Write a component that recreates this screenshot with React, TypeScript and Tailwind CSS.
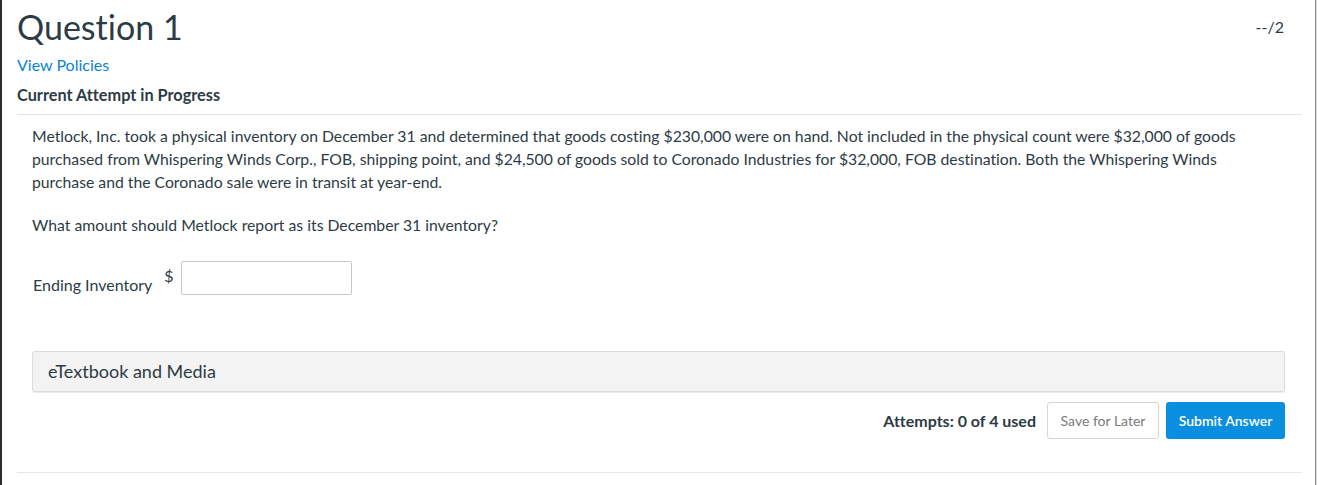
import React from "react";

const font = {
    fontFamily: "Lato, 'Noto Sans', sans-serif",
    fontVariantLigatures: "none" as const,
};

export default function App() {
    return (
        <div
            className="flex h-[485px] w-[1317px] overflow-hidden bg-white text-[#2d3b45]"
            style={font}
        >
            {/* window edge on the left */}
            <div className="w-[2px] shrink-0 bg-[#2b2b30]" />

            <div className="flex w-[1313px] shrink-0 flex-col pl-[15px] pr-[13px]">
                {/* heading */}
                <div className="flex flex-row items-start justify-between">
                    <h1 className="mt-[6px] text-[34px] leading-[42px] font-normal">
                        Question 1
                    </h1>
                    <span className="mt-[17px] mr-[18px] text-[16px] leading-[20px]">
                        --/2
                    </span>
                </div>
                <a className="mt-[7px] text-[16px] leading-[20px] text-[#0a84d6]">
                    View Policies
                </a>
                <div className="mt-[10px] text-[16.3px] leading-[20px] font-bold">
                    Current Attempt in Progress
                </div>
                <div className="mt-[9px] h-px bg-[#e6e6e6]" />

                {/* question body */}
                <div className="pl-[15px] pr-[16px]">
                    <p className="mt-[9px] pr-[12px] text-[15.75px] leading-[23px]">
                        Metlock, Inc. took a physical inventory on December 31 and
                        determined that goods costing $230,000 were on hand. Not included
                        in the physical count were $32,000 of goods purchased from
                        Whispering Winds Corp., FOB, shipping point, and $24,500 of goods
                        sold to Coronado Industries for $32,000, FOB destination. Both the
                        Whispering Winds purchase and the Coronado sale were in transit at
                        year-end.
                    </p>
                    <p className="mt-[20px] text-[15.75px] leading-[23px]">
                        What amount should Metlock report as its December 31 inventory?
                    </p>

                    <div className="mt-[25px] flex flex-row items-start pl-[1px]">
                        <span className="mt-[14px] text-[16px] leading-[20px]">
                            Ending Inventory
                        </span>
                        <span className="ml-[12px] mt-[5px] text-[16px] leading-[20px]">
                            $
                        </span>
                        <input
                            type="text"
                            className="ml-[7px] h-[34px] w-[171px] rounded-[2px] border border-[#c8c8c8] bg-white outline-none"
                        />
                    </div>

                    {/* textbook panel */}
                    <div className="mt-[56px] flex h-[41px] w-[1253px] items-center rounded-[3px] border border-[#dcdcdc] bg-[#f3f3f3] pl-[15px] text-[18px] shadow-[0_1px_1px_rgba(0,0,0,0.08)]">
                        eTextbook and Media
                    </div>

                    {/* actions */}
                    <div className="mt-[10px] flex w-[1253px] flex-row items-center justify-end">
                        <span className="text-[16px] font-bold">Attempts: 0 of 4 used</span>
                        <button className="ml-[11px] h-[37px] w-[112px] rounded-[3px] border border-[#d6d6d6] bg-white text-[14px] text-[#7a7a7a]">
                            Save for Later
                        </button>
                        <button className="ml-[7px] h-[37px] w-[119px] rounded-[3px] bg-[#0a8ee0] text-[14px] font-semibold text-white">
                            Submit Answer
                        </button>
                    </div>
                </div>

                <div className="mt-[33px] h-px bg-[#e6e6e6]" />
            </div>

            {/* window edge on the right */}
            <div className="w-px shrink-0 bg-[#8a8a8a]" />
            <div className="w-px shrink-0 bg-[#e0e0e0]" />
        </div>
    );
}
